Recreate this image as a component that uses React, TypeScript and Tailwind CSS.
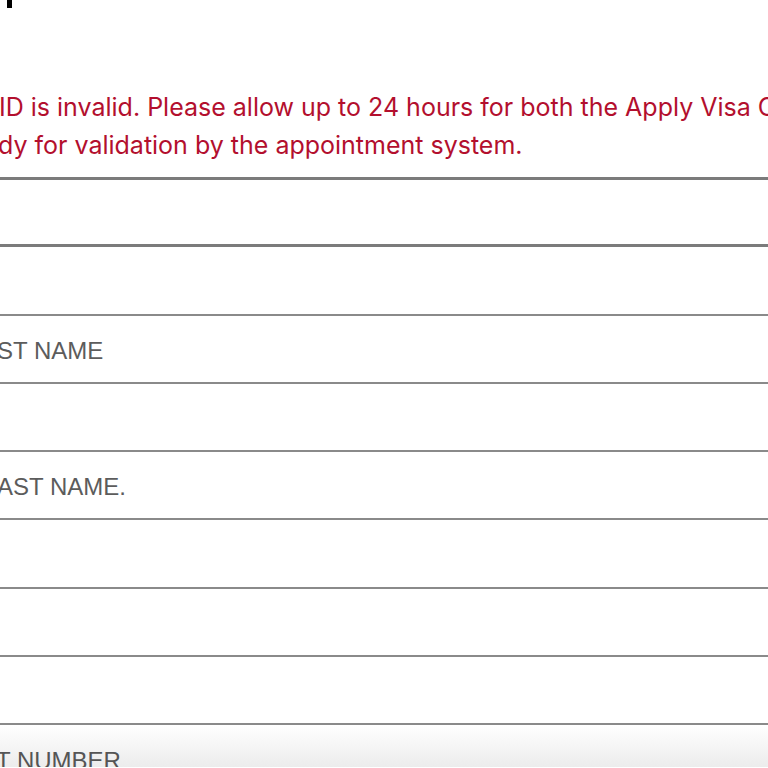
import React from 'react';

const rows: { label: string; h: string }[] = [
  { label: '', h: 'h-[69px]' },
  { label: 'ST NAME', h: 'h-[68px]' },
  { label: '', h: 'h-[68px]' },
  { label: 'AST NAME.', h: 'h-[68px]' },
  { label: '', h: 'h-[69px]' },
  { label: '', h: 'h-[68px]' },
  { label: '', h: 'h-[68px]' },
];

const App: React.FC = () => {
  return (
    <div className="w-[768px] h-[768px] overflow-hidden bg-white flex flex-col">
      {/* tail of the page heading, cut off by the crop */}
      <div className="h-[8px] flex">
        <div className="ml-[7px] w-[5px] h-[8px] bg-black" />
      </div>

      <div
        className="mt-[80px] text-[25px] leading-[38px] text-[#b30f2e] whitespace-nowrap overflow-hidden"
        style={{ fontFamily: 'Inter, "Noto Sans", sans-serif' }}
      >
        <p className="-ml-[1px]">ID is invalid. Please allow up to 24 hours for both the Apply Visa C</p>
        <p className="-ml-[2px]">dy for validation by the appointment system.</p>
      </div>

      <div className="mt-[13px] flex flex-col" style={{ fontFamily: '"Liberation Sans", Arial, sans-serif' }}>
        <div className="h-[70px] border-t-[3px] border-b-[3px] border-[#7b7b7b]" />
        {rows.map((r, i) => (
          <div
            key={i}
            className={`${r.h} border-b-2 border-[#8a8a8a] flex items-center overflow-hidden whitespace-nowrap text-[24px] text-[#5c5c5c]`}
          >
            {r.label && <span className="-ml-[3px] mt-[3px]">{r.label}</span>}
          </div>
        ))}
        <div className="h-[42px] bg-gradient-to-b from-white to-[#ececec] overflow-hidden flex flex-col">
          <span className="mt-[22px] -ml-[4px] text-[24px] leading-[28px] text-[#555] whitespace-nowrap">T NUMBER</span>
        </div>
      </div>
    </div>
  );
};

export default App;
